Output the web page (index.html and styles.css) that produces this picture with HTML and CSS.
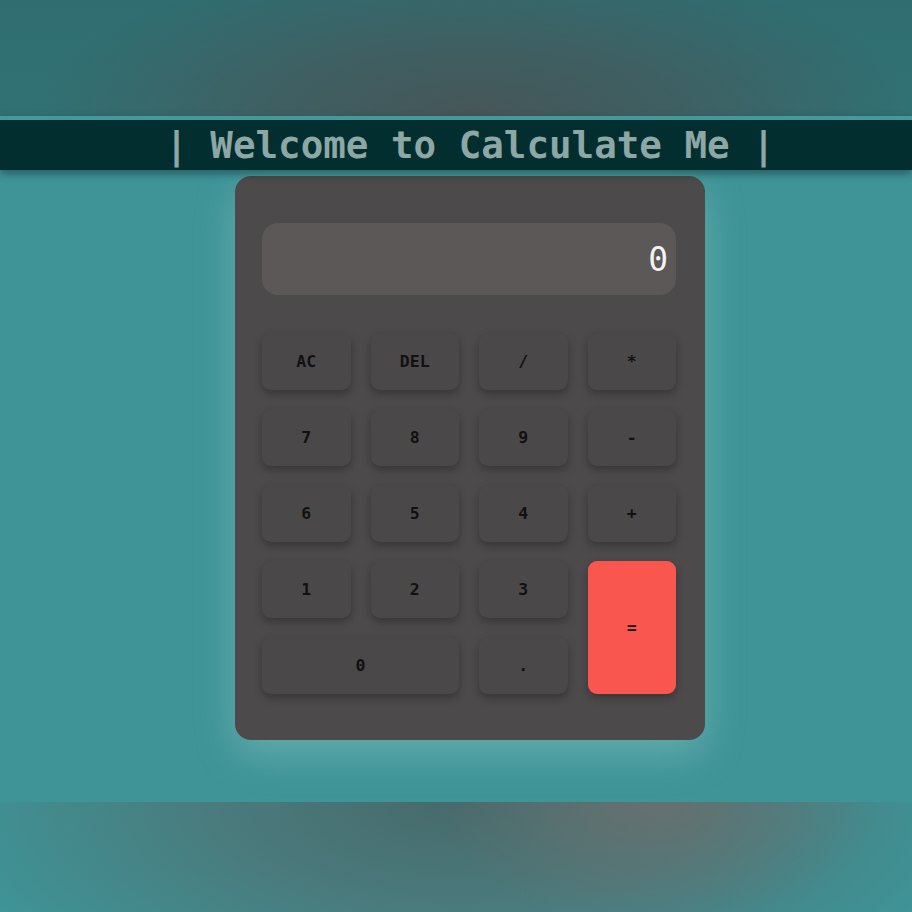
FILE: index.html
```html
<!DOCTYPE html>
<html lang="en">
<head>
<meta charset="utf-8">
<title>Calculate Me</title>
<link rel="stylesheet" href="styles.css">
</head>
<body>
<div class="top"></div>
<header class="banner"><h1>| Welcome to Calculate Me |</h1></header>
<main class="main">
  <div class="calc">
    <div class="display">0</div>
    <div class="keys">
      <button class="key">AC</button>
      <button class="key">DEL</button>
      <button class="key">/</button>
      <button class="key">*</button>
      <button class="key">7</button>
      <button class="key">8</button>
      <button class="key">9</button>
      <button class="key">-</button>
      <button class="key">6</button>
      <button class="key">5</button>
      <button class="key">4</button>
      <button class="key">+</button>
      <button class="key">1</button>
      <button class="key">2</button>
      <button class="key">3</button>
      <button class="key equals">=</button>
      <button class="key zero">0</button>
      <button class="key">.</button>
    </div>
  </div>
</main>
<div class="bottom"></div>
</body>
</html>
```
FILE: styles.css
```css
html, body {
  margin: 0;
  padding: 0;
}
body {
  background: #3e9497;
  width: 912px;
  height: 912px;
  overflow: hidden;
  display: flex;
  flex-direction: column;
}
.top {
  height: 116px;
  flex: none;
  background:
    radial-gradient(ellipse 440px 160px at 52% 100%, #465658 0%, #3f5f62 45%, rgba(49,108,111,0) 100%),
    linear-gradient(#2f6d70, #317174);
}
.banner {
  flex: none;
  height: 50px;
  border-top: 4px solid #429a9c;
  background: #032e30;
  box-shadow: 0 4px 8px rgba(0, 0, 0, 0.35);
  position: relative;
  z-index: 1;
  padding-left: 28px;
}
.banner h1 {
  margin: 0;
  text-align: center;
  font-family: "DejaVu Sans Mono", monospace;
  font-weight: bold;
  font-size: 37.5px;
  line-height: 50px;
  color: #8da7a4;
  white-space: pre;
}
.main {
  height: 633px;
  flex: none;
  display: flex;
  justify-content: center;
  align-items: flex-start;
  padding-top: 6px;
  padding-left: 28px;
  box-sizing: border-box;
}
.calc {
  width: 470px;
  height: 564px;
  box-sizing: border-box;
  padding: 47px 29px 47px 27px;
  background: #4d4a4b;
  border-radius: 16px;
  box-shadow: 0 14px 40px rgba(200, 235, 235, 0.28);
}
.display {
  height: 72px;
  background: #5c5857;
  border-radius: 16px;
  margin-bottom: 38px;
  display: flex;
  justify-content: flex-end;
  align-items: center;
  padding: 0 8px;
  font-family: "DejaVu Sans Mono", monospace;
  font-size: 33px;
  color: #f2f2f2;
}
.keys {
  display: grid;
  grid-template-columns: repeat(4, 1fr);
  grid-auto-rows: 57px;
  column-gap: 20px;
  row-gap: 19px;
}
.key {
  border: none;
  margin: 0;
  padding: 0;
  background: #4b4849;
  border-radius: 9px;
  box-shadow: 0 4px 8px rgba(0, 0, 0, 0.28);
  font-family: "DejaVu Sans Mono", monospace;
  font-weight: bold;
  font-size: 16.5px;
  color: #111;
}
.equals {
  grid-column: 4;
  grid-row: 4 / span 2;
  background: #f9564f;
}
.zero {
  grid-column: 1 / span 2;
}
.bottom {
  flex: none;
  height: 112px;
  margin-top: -1px;
  background:
    radial-gradient(ellipse 220px 130px at 72% 0%, rgba(108,110,108,0.8) 0%, rgba(100,110,110,0) 100%),
    radial-gradient(ellipse 520px 230px at 50% 0%, #476a6b 0%, #4a7a7c 45%, rgba(62,148,151,0) 100%),
    #3e9497;
}
```
